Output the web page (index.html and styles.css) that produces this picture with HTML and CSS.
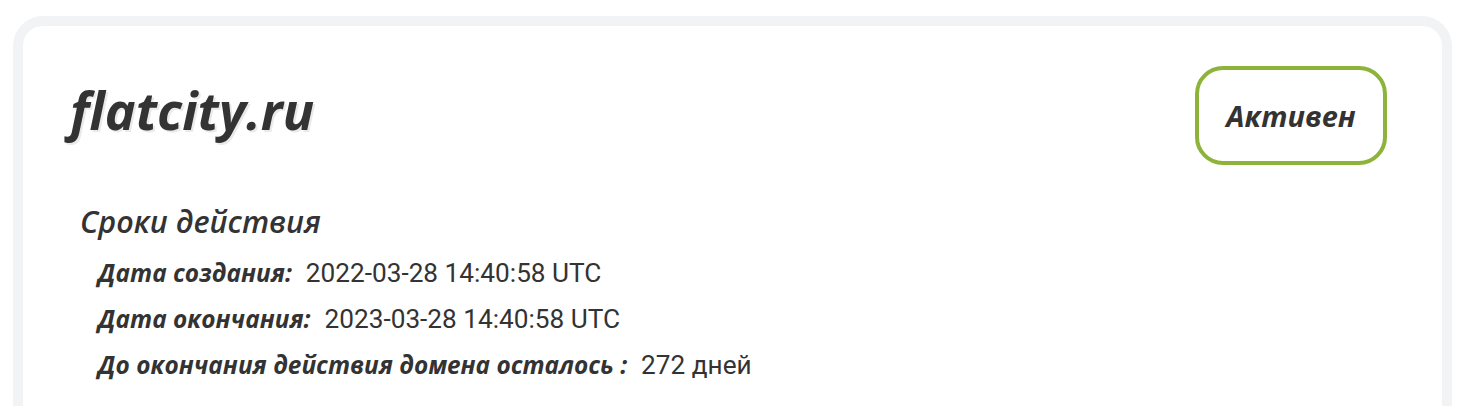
FILE: index.html
```html
<!DOCTYPE html>
<html lang="ru">
<head>
<meta charset="utf-8">
<link rel="stylesheet" href="styles.css">
</head>
<body>
<div class="card">
  <div class="head">
    <h1 class="domain">flatcity.ru</h1>
    <div class="badge">Активен</div>
  </div>
  <h2 class="section">Сроки действия</h2>
  <div class="rows">
    <div class="row"><span class="label">Дата создания:</span><span class="value">2022-03-28 14:40:58 UTC</span></div>
    <div class="row"><span class="label">Дата окончания:</span><span class="value">2023-03-28 14:40:58 UTC</span></div>
    <div class="row"><span class="label">До окончания действия домена осталось :</span><span class="value">272 дней</span></div>
  </div>
</div>
</body>
</html>
```
FILE: styles.css
```css
html, body { margin: 0; padding: 0; background: #fff; }
body { padding: 16px 12px 0 13px; font-family: "Open Sans", sans-serif; color: #333; overflow: hidden; height: 406px; box-sizing: border-box; }
.card {
  border: 10px solid #f2f3f5;
  border-bottom: none;
  border-radius: 30px 30px 0 0;
  padding: 40px 55px 0 45px;
  height: 600px;
  box-sizing: border-box;
}
.head { display: flex; justify-content: space-between; align-items: flex-start; }
.domain {
  margin: 18px 0 0 2px;
  font-size: 52px;
  font-weight: 700;
  font-style: italic;
  line-height: 1;
  text-shadow: 2px 2px 0 #eaeaea;
}
.badge {
  margin-top: 0;
  width: 192px; height: 99px;
  box-sizing: border-box;
  border: 4px solid #8db33a;
  border-radius: 28px;
  display: flex; align-items: center; justify-content: center;
  font-size: 29px; font-weight: 700; font-style: italic;
}
.section { margin: 38px 0 0 12px; font-size: 30.5px; font-weight: 600; font-style: italic; line-height: 1.2; }
.rows { margin: 10px 0 0 30px; display: flex; flex-direction: column; }
.row { display: flex; gap: 14px; font-size: 24.4px; line-height: 45px; align-items: baseline; }
.label { font-weight: 700; font-style: italic; }
.value { font-family: Roboto, sans-serif; font-size: 26.2px; }
```
